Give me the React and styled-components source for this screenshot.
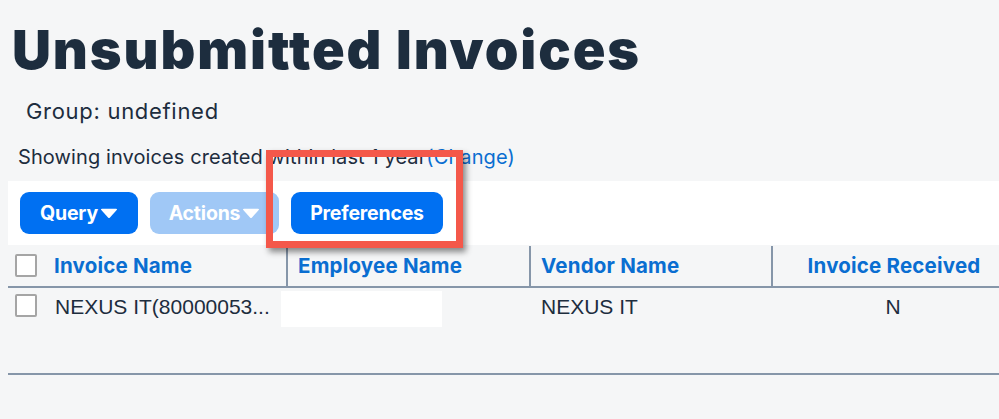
import React from "react";
import styled, { createGlobalStyle } from "styled-components";

const Global = createGlobalStyle`
  html, body { margin: 0; padding: 0; background: #f5f6f7; }
  body { font-family: Inter, "Liberation Sans", Arial, sans-serif; color: #1d2d3e; }
  * { box-sizing: border-box; }
`;

const Page = styled.div`
  position: relative;
  width: 999px;
  height: 419px;
  overflow: hidden;
  padding-left: 8px;
`;

const Title = styled.h1`
  margin: 0;
  padding: 20px 0 0 4px;
  font-family: Inter, sans-serif;
  font-weight: 900;
  font-size: 54px;
  line-height: 60px;
  letter-spacing: 1.9px;
  color: #1d2d3e;
`;

const Group = styled.div`
  margin: 17px 0 0 18px;
  font-size: 22px;
  line-height: 28px;
  letter-spacing: 0.7px;
  color: #1d2d3e;
`;

const Showing = styled.div`
  margin: 20px 0 0 10px;
  font-size: 20px;
  line-height: 24px;
  letter-spacing: 0.1px;
  color: #1d2d3e;
  a { color: #0a6ed1; text-decoration: none; }
`;

const Toolbar = styled.div`
  margin-top: 12px;
  height: 64px;
  background: #ffffff;
  display: flex;
  align-items: center;
  gap: 12px;
  padding: 0 12px;
`;

const Button = styled.button`
  height: 42px;
  width: ${(p) => p.$w}px;
  border: none;
  border-radius: 9px;
  background: ${(p) => (p.$disabled ? "#a0c8f6" : "#0070f2")};
  color: #ffffff;
  font-family: Inter, sans-serif;
  font-weight: 700;
  font-size: 19.5px;
  letter-spacing: -0.2px;
  display: flex;
  align-items: center;
  justify-content: center;
  gap: 2px;
  padding: 0;
`;

const Caret = styled.svg`
  width: 18px;
  height: 11px;
`;

const Table = styled.div`
  margin-top: 2px;
`;

const HeaderRow = styled.div`
  display: grid;
  grid-template-columns: 278px 243px 242px 1fr;
  height: 41px;
  border-bottom: 2px solid #8696a9;
`;

const Row = styled.div`
  display: grid;
  grid-template-columns: 278px 243px 242px 1fr;
  height: 87px;
  border-bottom: 2px solid #8696a9;
`;

const HCell = styled.div`
  display: flex;
  align-items: center;
  justify-content: ${(p) => (p.$center ? "center" : "flex-start")};
  padding: ${(p) => (p.$center ? "0 0 2px 16px" : "0 0 2px 10px")};
  border-left: ${(p) => (p.$sep ? "2px solid #8696a9" : "none")};
  margin-top: ${(p) => (p.$sep ? "-1px" : "0")};
  gap: 17px;
  font-weight: 700;
  font-size: 20.5px;
  letter-spacing: 0.2px;
  color: #0a6ed1;
  &:first-child { padding-left: 7px; }
`;

const Cell = styled.div`
  display: flex;
  align-items: flex-start;
  justify-content: ${(p) => (p.$center ? "center" : "flex-start")};
  padding: ${(p) => (p.$center ? "6px 0 0 16px" : "6px 0 0 12px")};
  gap: 18px;
  font-family: "Liberation Sans", Arial, sans-serif;
  font-size: 21px;
  line-height: 26px;
  color: #1d2d3e;
  &:first-child { padding-left: 7px; }
`;

const Checkbox = styled.span`
  width: 22px;
  height: 23px;
  flex: none;
  border: 2px solid #a5a5a5;
  border-radius: 2px;
  background: #ffffff;
`;

const Blank = styled.div`
  width: 161px;
  height: 36px;
  margin: -3px 0 0 -17px;
  background: #ffffff;
`;

const Highlight = styled.div`
  position: absolute;
  left: 266px;
  top: 150px;
  width: 197px;
  height: 98px;
  border: 7px solid #f4584a;
  box-shadow: 3px 4px 6px rgba(0, 0, 0, 0.45);
  pointer-events: none;
`;

const CaretIcon = () => (
  <Caret viewBox="0 0 17 10">
    <path d="M1 1.5 Q0.6 0.5 2 0.5 H15 Q16.4 0.5 16 1.5 L9.2 9 Q8.5 9.6 7.8 9 Z" fill="#ffffff" />
  </Caret>
);

export default function App() {
  return (
    <>
      <Global />
      <Page>
        <Title>Unsubmitted Invoices</Title>
        <Group>Group: undefined</Group>
        <Showing>
          Showing invoices created within last 1 year<a href="#">(Change)</a>
        </Showing>
        <Toolbar>
          <Button $w={118}>Query<CaretIcon /></Button>
          <Button $w={129} $disabled>Actions<CaretIcon /></Button>
          <Button $w={152}>Preferences</Button>
        </Toolbar>
        <Table>
          <HeaderRow>
            <HCell><Checkbox />Invoice Name</HCell>
            <HCell $sep>Employee Name</HCell>
            <HCell $sep>Vendor Name</HCell>
            <HCell $sep $center>Invoice Received</HCell>
          </HeaderRow>
          <Row>
            <Cell><Checkbox />NEXUS IT(80000053...</Cell>
            <Cell><Blank /></Cell>
            <Cell>NEXUS IT</Cell>
            <Cell $center>N</Cell>
          </Row>
        </Table>
        <Highlight />
      </Page>
    </>
  );
}
